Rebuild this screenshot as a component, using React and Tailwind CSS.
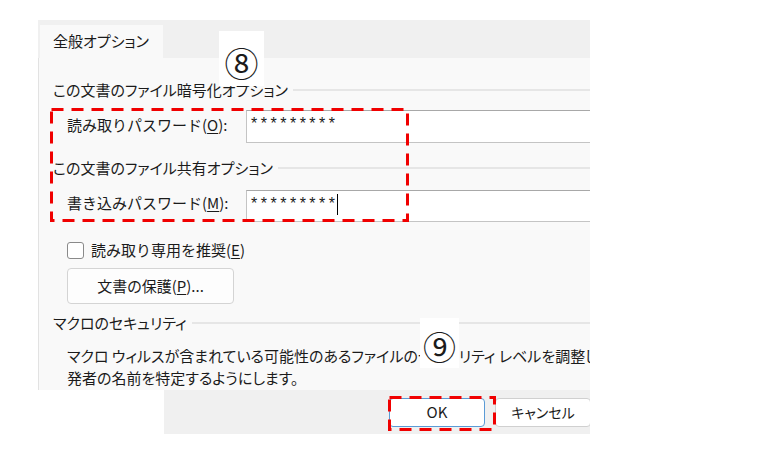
import React from 'react';

const jp = {
  fontFamily: '"Noto Sans CJK JP", "Noto Sans", sans-serif',
};

const GroupHeading = ({ children }) => (
  <div className="flex items-center h-[20px]">
    <span className="whitespace-nowrap">{children}</span>
    <div className="flex-1 ml-[5px] h-[2px] bg-[#e6e6e6]" />
  </div>
);

const Key = ({ children }) => <span className="underline underline-offset-2">{children}</span>;

// red dashed annotation frame
const DashBox = ({ x, y, w, h }) => (
  <svg className="absolute" style={{ left: x, top: y }} width={w} height={h}>
    <rect x="1.5" y="1.5" width={w - 3} height={h - 3} fill="none" stroke="#f00000" strokeWidth="3" strokeDasharray="12 8" />
  </svg>
);

const App = () => {
  return (
    <div
      className="relative w-[767px] h-[469px] bg-white overflow-hidden text-[15px] text-[#1b1b1b] [font-feature-settings:'palt']"
      style={jp}
    >
      {/* Dialog */}
      <div className="ml-[38px] pt-[20px] w-[552px]">
        {/* Tab strip */}
        <div className="h-[38px] bg-[#f0f0f0] flex items-end pl-[2px]">
          <div className="w-[123px] h-[33px] bg-[#f9f9f9] pl-[13px] pt-[6px] leading-[20px]">全般オプション</div>
        </div>

        {/* Panel */}
        <div className="h-[332px] bg-[#f9f9f9] border-l border-[#e2e2e2] overflow-hidden pl-[14px]">
          <div className="mt-[22px]">
            <GroupHeading>この文書のファイル暗号化オプション</GroupHeading>
          </div>

          <div className="mt-[10px] flex items-center pl-[14px]">
            <span className="w-[179px] shrink-0 whitespace-nowrap -mt-[3px] [font-feature-settings:normal]">
              読み取りパスワード(<Key>O</Key>):
            </span>
            <div className="w-[400px] h-[33px] bg-white border border-[#c4c4c4] border-t-[#a8a8a8] pl-[4px] pt-[3px] tracking-[3.5px] text-[16px] leading-[20px] shrink-0" style={{ fontFamily: '"Liberation Sans", sans-serif' }}>
              *********
            </div>
          </div>

          <div className="mt-[15px]">
            <GroupHeading>この文書のファイル共有オプション</GroupHeading>
          </div>

          <div className="mt-[12px] flex items-center pl-[14px]">
            <span className="w-[179px] shrink-0 whitespace-nowrap -mt-[6px] [font-feature-settings:normal]">
              書き込みパスワード(<Key>M</Key>):
            </span>
            <div className="w-[400px] h-[32px] bg-white border border-[#c4c4c4] border-t-[#a8a8a8] pl-[4px] pt-[3px] text-[16px] leading-[20px] shrink-0 flex items-start" style={{ fontFamily: '"Liberation Sans", sans-serif' }}>
              <span className="tracking-[3.5px]">*********</span>
              <span className="w-px h-[21px] bg-black -ml-[2px]" />
            </div>
          </div>

          <label className="mt-[18px] ml-[14px] flex items-center h-[20px] gap-[7px] [font-feature-settings:normal]">
            <span className="w-[17px] h-[17px] rounded-[3px] border border-[#8a8a8a] bg-white" />
            <span>
              読み取り専用を推奨(<Key>E</Key>)
            </span>
          </label>

          <button className="mt-[8px] ml-[14px] w-[167px] h-[36px] rounded-[4px] border border-[#d4d4d4] bg-[#fdfdfd] flex items-center justify-center">
            文書の保護(<Key>P</Key>)...
          </button>

          <div className="mt-[9px]">
            <GroupHeading>マクロのセキュリティ</GroupHeading>
          </div>

          <div className="mt-[12px] pl-[14px] leading-[22px] whitespace-nowrap">
            <div>マクロ ウィルスが含まれている可能性のあるファイルのセキュリティ レベルを調整し、信頼できるマクロ開</div>
            <div>発者の名前を特定するようにします。</div>
          </div>
        </div>
      </div>

      {/* Button strip */}
      <div className="ml-[164px] w-[426px] h-[44px] bg-[#f0f0f0] flex items-start pt-[8px] pl-[225px] gap-[10px] overflow-hidden">
        <button className="w-[96px] h-[29px] shrink-0 rounded-[4px] border border-[#5a9bd6] bg-white flex items-center justify-center text-[15px]">
          OK
        </button>
        <button className="w-[96px] h-[29px] shrink-0 rounded-[4px] border border-[#d0d0d0] bg-white flex items-center justify-center text-[14px]">
          キャンセル
        </button>
      </div>

      {/* Annotations */}
      <div className="absolute left-[219px] top-[31px] w-[45px] h-[55px] bg-white flex items-center justify-center pt-[9px] text-[34px] leading-none">
        ⑧
      </div>
      <div className="absolute left-[420px] top-[318px] w-[39px] h-[50px] bg-white flex items-center justify-center pt-[6px] text-[33px] leading-none">
        ⑨
      </div>
      <DashBox x={50} y={108} w={359} h={114} />
      <DashBox x={388} y={396} w={108} h={35} />
    </div>
  );
};

export default App;
